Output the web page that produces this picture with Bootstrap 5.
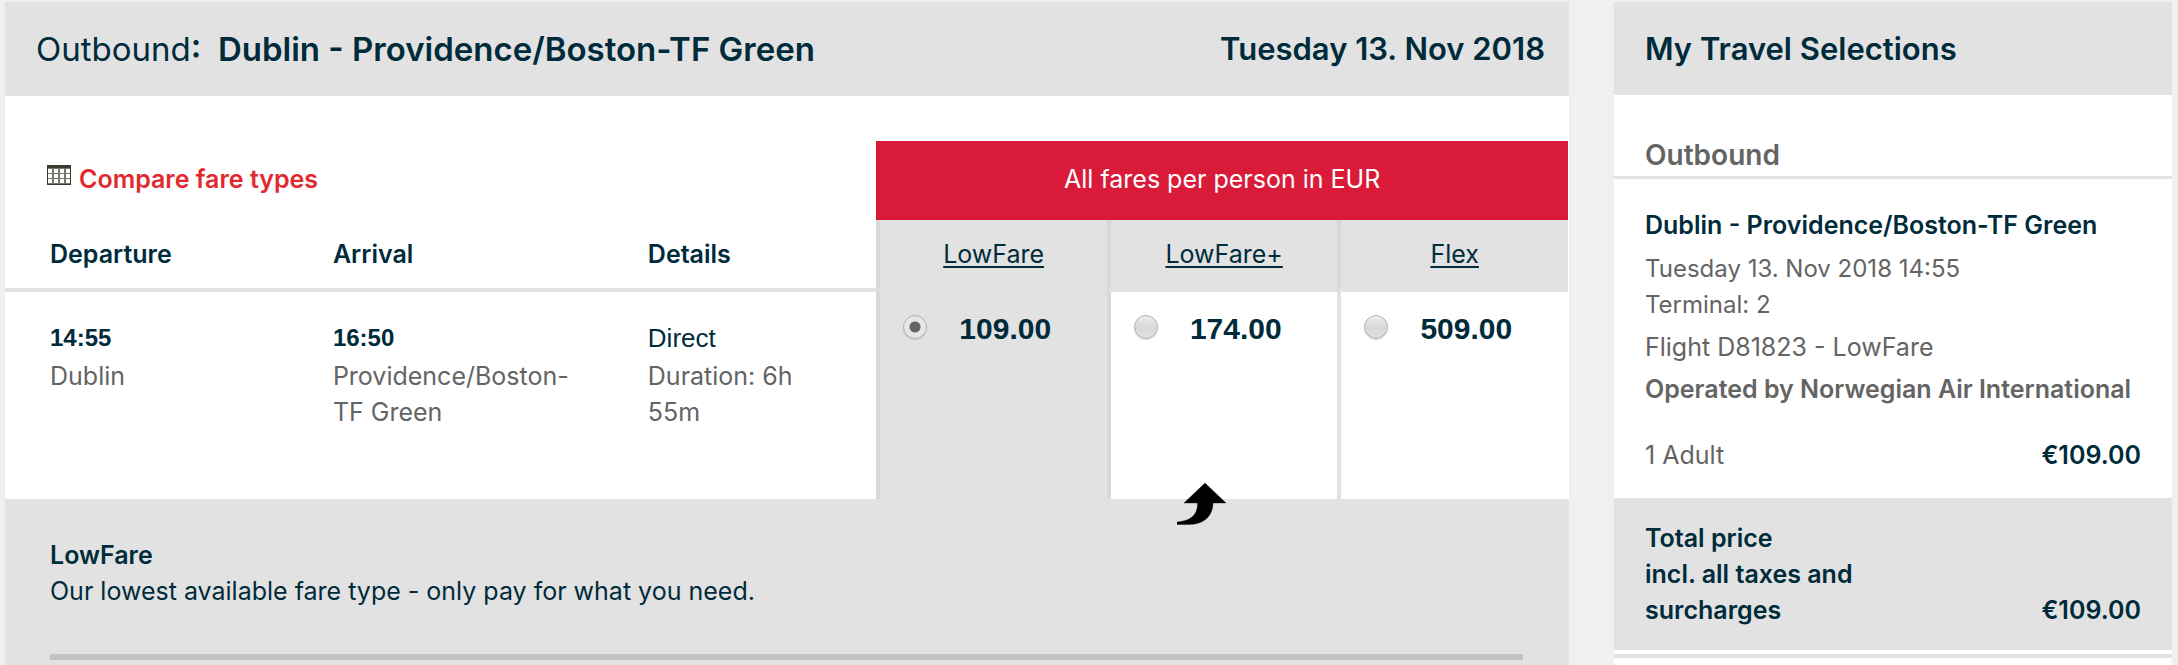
<!DOCTYPE html>
<html lang="en">
<head>
<meta charset="utf-8">
<meta name="viewport" content="width=device-width, initial-scale=1">
<title>Select flight</title>
<link href="https://cdn.jsdelivr.net/npm/bootstrap@5.3.0/dist/css/bootstrap.min.css" rel="stylesheet">
<style>
  :root { --ink: #002b3b; --soft: #646464; --band: #e2e2e2; --edge: #d8d8d8; --brand: #d91a38; }
  body { background: #f0f0f0; color: var(--ink); font: 400 25px/36px Inter, sans-serif; }
  .page { gap: 45px; padding: 2px 6px 0 5px; }
  .results { flex: 1564 1 0; min-width: 0; }
  .summary { flex: 558 1 0; min-width: 0; }
  .band { background: var(--band); }
  .ink { color: var(--ink); }
  .soft { color: var(--soft); }
  .fw-mid { font-weight: 600; }
  h1, h2 { font-size: 31px; line-height: 40px; font-weight: 600; margin: 0; }
  .route-title { font-size: 33px; }
  .panel-head { padding: 27px 24px 27px 31px; }
  .summary .panel-head { padding: 27px 31px 26px; }

  .fares { width: calc(100% - 1px); margin-top: 45px; table-layout: fixed; border-collapse: separate; border-spacing: 0; }
  .fares th, .fares td { vertical-align: top; padding: 0 24px 0 45px; font-weight: 400; }
  .fares p { margin: 0; }
  .fares .top-row th { padding-top: 20px; padding-bottom: 23px; }
  .fares .top-row th:first-child { padding-left: 42px; }
  .fares .fare-banner { background: var(--brand); color: #fff; padding-left: 0; padding-right: 0; }
  .fares .head-row th { padding-top: 16px; padding-bottom: 16px; border-bottom: 4px solid var(--band); font-weight: 600; }
  .fares .head-row .fare-name { background: var(--band); border-left: 4px solid var(--edge); padding-left: 0; padding-right: 0; font-weight: 400; }
  .fare-name a { color: var(--ink); text-decoration-thickness: 2px; text-underline-offset: 3px; }
  .fares .flight-row td { padding-top: 28px; height: 207px; }
  .fares .flight-row .details { padding-right: 45px; }
  .fares .flight-row .fare { border-left: 4px solid var(--band); padding: 19px 0 0 23px; position: relative; }
  .fares .flight-row .fare.picked { background: var(--band); border-color: var(--edge); }
  .fares .flight-row .fare.after-picked { border-color: var(--edge); }
  .compare { color: #e2292f; gap: 8px; }
  .fares .clock, .fares .stops { margin-bottom: 2px; }
  .clock { font: 700 24px/36px "Liberation Sans", sans-serif; }
  .stops { font: 400 26px/36px "Liberation Sans", sans-serif; }
  .price { font: 700 30px/36px "Liberation Sans", sans-serif; gap: 32px; }
  .price input { appearance: none; width: 24px; height: 24px; margin: 0 0 4px; border: 1px solid #b0b0b0; border-radius: 50%;
    background: linear-gradient(#ececec, #d9d9d9 50%, #dedede); box-shadow: 0 1px 1px #0002; flex: none; }
  .price input:checked { background: radial-gradient(circle, #646464 5px, #e6e6e6 6px); }
  .pointer { position: absolute; left: 66px; bottom: -26px; z-index: 1; }
  .fare-info { padding: 38px 46px 5px 45px; }
  .fare-info hr { margin: 45px 0 0; border: 0; height: 6px; background: #c2c2c2; opacity: 1; }

  .summary h3 { font-size: 28px; line-height: 36px; font-weight: 600; margin: 0; padding: 42px 31px 3px; border-bottom: 3px solid var(--band); }
  .trip { padding: 28px 31px 25px; }
  .trip p { margin: 0 0 6px; }
  .trip .route { margin-bottom: 8px; }
  .traveller { margin-top: 30px; }
  .trip .date { font-size: 24px; }
  .total { padding: 22px 31px; }
  .total .label { width: 45%; }
  .end-rule { border-top: 4px solid var(--band); margin-top: 4px; }
</style>
</head>
<body>
<div class="page d-flex min-vh-100">
  <main class="results bg-white d-flex flex-column">
    <header class="panel-head band d-flex justify-content-between align-items-center">
      <h1 class="route-title"><span class="fw-normal">Outbound</span>:&nbsp; Dublin - Providence/Boston-TF Green</h1>
      <h2>Tuesday 13. Nov 2018</h2>
    </header>

    <table class="fares">
      <colgroup>
        <col style="width:18.1%"><col style="width:20.15%"><col style="width:17.5%">
        <col style="width:14.75%"><col style="width:14.75%"><col style="width:14.75%">
      </colgroup>
      <thead>
        <tr class="top-row">
          <th colspan="3">
            <a href="#" class="compare d-flex text-decoration-none fw-mid">
              <svg width="24" height="20" viewBox="0 0 24 20" class="mt-1" aria-hidden="true">
                <path fill="#3c392d" d="M0 0h24v20H0z"/>
                <path fill="#77756b" d="M1 3h22v16H1z"/>
                <path stroke="#fff" stroke-width="4" stroke-dasharray="4 2" d="M1 6h22M1 11h22M1 16h22"/>
              </svg>
              Compare fare types
            </a>
          </th>
          <th colspan="3" class="fare-banner text-center">All fares per person in EUR</th>
        </tr>
        <tr class="head-row">
          <th>Departure</th>
          <th>Arrival</th>
          <th>Details</th>
          <th class="fare-name text-center"><a href="#">LowFare</a></th>
          <th class="fare-name text-center"><a href="#">LowFare+</a></th>
          <th class="fare-name text-center"><a href="#">Flex</a></th>
        </tr>
      </thead>
      <tbody>
        <tr class="flight-row">
          <td><p class="clock">14:55</p><p class="soft">Dublin</p></td>
          <td><p class="clock">16:50</p><p class="soft">Providence/Boston-TF Green</p></td>
          <td class="details"><p class="stops">Direct</p><p class="soft">Duration: 6h 55m</p></td>
          <td class="fare picked"><label class="price d-flex align-items-center"><input type="radio" name="fare" checked>109.00</label></td>
          <td class="fare after-picked">
            <label class="price d-flex align-items-center"><input type="radio" name="fare">174.00</label>
            <svg class="pointer" width="50" height="43" viewBox="0 0 50 43" aria-hidden="true">
              <path stroke="#0005" d="M28 1 49 21H36C36 34 27 42.500 12 42.500H0V40C12 39 21 34 20.500 21H7Z"/>
            </svg>
          </td>
          <td class="fare"><label class="price d-flex align-items-center"><input type="radio" name="fare">509.00</label></td>
        </tr>
      </tbody>
    </table>

    <section class="fare-info band flex-grow-1">
      <div class="fw-mid">LowFare</div>
      <div>Our lowest available fare type - only pay for what you need.</div>
      <hr>
    </section>
  </main>

  <aside class="summary bg-white">
    <header class="panel-head band"><h2>My Travel Selections</h2></header>
    <h3 class="soft">Outbound</h3>
    <section class="trip soft">
      <p class="route fw-mid ink">Dublin - Providence/Boston-TF Green</p>
      <p class="date">Tuesday 13. Nov 2018 14:55<br>Terminal: 2</p>
      <p>Flight D81823 - LowFare</p>
      <p class="fw-mid">Operated by Norwegian Air International</p>
      <div class="traveller d-flex justify-content-between">
        <span>1 Adult</span><span class="fw-mid ink">€109.00</span>
      </div>
    </section>
    <section class="total band fw-mid d-flex justify-content-between align-items-end">
      <div class="label">Total price<br>incl. all taxes and surcharges</div>
      <div>€109.00</div>
    </section>
    <div class="end-rule"></div>
  </aside>
</div>
<script src="https://cdn.jsdelivr.net/npm/bootstrap@5.3.0/dist/js/bootstrap.bundle.min.js"></script>
</body>
</html>
